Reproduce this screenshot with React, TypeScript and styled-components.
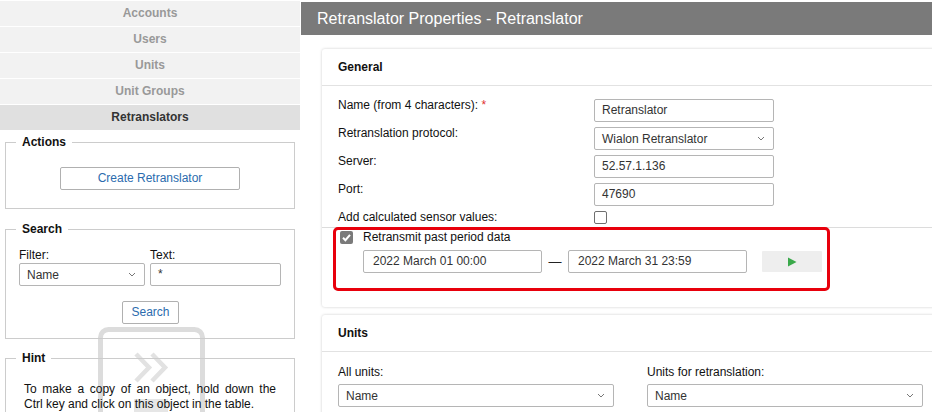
import React from "react";
import styled, { createGlobalStyle } from "styled-components";

const GlobalStyle = createGlobalStyle`
  html, body {
    margin: 0;
    padding: 0;
    background: #ffffff;
  }
  body {
    font-family: "Liberation Sans", Arial, sans-serif;
    font-size: 12px;
    color: #222;
  }
  * {
    box-sizing: border-box;
  }
`;

const navItems = ["Accounts", "Users", "Units", "Unit Groups", "Retranslators"];

const Chevron = () => (
  <svg width="8" height="5" viewBox="0 0 8 5">
    <path d="M1 1 L4 4 L7 1" fill="none" stroke="#777" strokeWidth="1" />
  </svg>
);

const CheckMark = () => (
  <svg width="13" height="13" viewBox="0 0 13 13">
    <path d="M3 6.8 L5.4 9.2 L10 3.8" fill="none" stroke="#fff" strokeWidth="2" />
  </svg>
);

const PlayIcon = () => (
  <svg width="10" height="10" viewBox="0 0 10 10">
    <path d="M1 0.5 L9.5 5 L1 9.5 Z" fill="#3aa94a" />
  </svg>
);

const WatermarkIcon = () => (
  <Watermark width="112" height="87" viewBox="0 0 112 87">
    <rect x="5.5" y="4.5" width="102" height="120" rx="8" fill="none" stroke="#dcdcdc" strokeWidth="5" />
    <path d="M41 29 L54 42.5 L41 56" fill="none" stroke="#e2e2e2" strokeWidth="4.5" />
    <path d="M57 29 L70 42.5 L57 56" fill="none" stroke="#e2e2e2" strokeWidth="4.5" />
    <rect x="39" y="74" width="34" height="20" fill="#e6e6e6" />
  </Watermark>
);

const App = () => {
  return (
    <>
      <GlobalStyle />
      <Page>
        <Sidebar>
          <WatermarkIcon />
          <Nav>
            {navItems.map((item) => (
              <NavItem key={item} $active={item === "Retranslators"}>
                {item}
              </NavItem>
            ))}
          </Nav>

          <Group $gap={4}>
            <Legend>Actions</Legend>
            <ActionsBody>
              <Button $wide>Create Retranslator</Button>
            </ActionsBody>
          </Group>

          <Group $gap={13}>
            <Legend>Search</Legend>
            <SearchBody>
              <SearchFields>
                <SearchColumn $width={126}>
                  <SmallLabel>Filter:</SmallLabel>
                  <SelectBox>
                    <span>Name</span>
                    <Chevron />
                  </SelectBox>
                </SearchColumn>
                <SearchColumn $width={131}>
                  <SmallLabel>Text:</SmallLabel>
                  <TextBox>*</TextBox>
                </SearchColumn>
              </SearchFields>
              <Button>Search</Button>
            </SearchBody>
          </Group>

          <Group $gap={12}>
            <Legend>Hint</Legend>
            <HintText>
              To make a copy of an object, hold down the Ctrl key and click on this object in the table.
            </HintText>
          </Group>
        </Sidebar>

        <Main>
          <Header>Retranslator Properties - Retranslator</Header>
          <Content>
            <Card>
              <CardHeader>General</CardHeader>
              <FieldGrid>
                <FieldLabel>
                  Name (from 4 characters): <Required>*</Required>
                </FieldLabel>
                <TextBox>Retranslator</TextBox>
                <FieldLabel>Retranslation protocol:</FieldLabel>
                <SelectBox>
                  <span>Wialon Retranslator</span>
                  <Chevron />
                </SelectBox>
                <FieldLabel>Server:</FieldLabel>
                <TextBox>52.57.1.136</TextBox>
                <FieldLabel>Port:</FieldLabel>
                <TextBox>47690</TextBox>
                <FieldLabel>Add calculated sensor values:</FieldLabel>
                <CheckBox />
              </FieldGrid>
              <RetransmitSection>
                <Highlight>
                  <CheckRow>
                    <CheckBox $checked>
                      <CheckMark />
                    </CheckBox>
                    <FieldLabel>Retransmit past period data</FieldLabel>
                  </CheckRow>
                  <DateRow>
                    <DateBox>2022 March 01 00:00</DateBox>
                    <Dash>—</Dash>
                    <DateBox>2022 March 31 23:59</DateBox>
                    <PlayButton>
                      <PlayIcon />
                    </PlayButton>
                  </DateRow>
                </Highlight>
              </RetransmitSection>
            </Card>

            <Card>
              <CardHeader>Units</CardHeader>
              <UnitsBody>
                <UnitsColumn>
                  <FieldLabel>All units:</FieldLabel>
                  <SelectBox>
                    <span>Name</span>
                    <Chevron />
                  </SelectBox>
                </UnitsColumn>
                <UnitsColumn>
                  <FieldLabel>Units for retranslation:</FieldLabel>
                  <SelectBox>
                    <span>Name</span>
                    <Chevron />
                  </SelectBox>
                </UnitsColumn>
              </UnitsBody>
            </Card>
          </Content>
        </Main>
      </Page>
    </>
  );
};

const Page = styled.div`
  display: flex;
  width: 932px;
  height: 412px;
  overflow: hidden;
  background: #fff;
`;

const Sidebar = styled.aside`
  position: relative;
  width: 300px;
  flex-shrink: 0;
  display: flex;
  flex-direction: column;
`;

const Nav = styled.nav`
  position: relative;
  display: flex;
  flex-direction: column;
  padding-top: 1px;
`;

const NavItem = styled.div<{ $active?: boolean }>`
  height: 25px;
  margin-bottom: 1px;
  line-height: 25px;
  text-align: center;
  font-weight: bold;
  font-size: 12px;
  background: ${(p) => (p.$active ? "#e0e0e0" : "#f2f2f2")};
  color: ${(p) => (p.$active ? "#333" : "#999")};
`;

const Group = styled.fieldset<{ $gap: number }>`
  position: relative;
  margin: ${(p) => p.$gap}px 5px 0;
  padding: 0;
  border: 1px solid #cccccc;
  min-width: 0;
`;

const Legend = styled.legend`
  margin-left: 10px;
  padding: 0 6px;
  font-weight: bold;
  font-size: 12px;
  line-height: 15px;
  color: #111;
`;

const ActionsBody = styled.div`
  display: flex;
  justify-content: center;
  padding: 17px 0 18px;
`;

const Button = styled.div<{ $wide?: boolean }>`
  height: 23px;
  line-height: 21px;
  padding: 0 8px;
  width: ${(p) => (p.$wide ? "180px" : "auto")};
  text-align: center;
  border: 1px solid #b0b0b0;
  border-radius: 2px;
  background: #fff;
  color: #2b6cae;
  font-size: 12px;
`;

const SearchBody = styled.div`
  display: flex;
  flex-direction: column;
  align-items: center;
  gap: 15px;
  padding: 11px 12px 14px 13px;
`;

const SearchFields = styled.div`
  display: flex;
  gap: 5px;
  width: 100%;
`;

const SearchColumn = styled.div<{ $width: number }>`
  display: flex;
  flex-direction: column;
  width: ${(p) => p.$width}px;
`;

const SmallLabel = styled.div`
  line-height: 15px;
  font-size: 12px;
  color: #111;
`;

const SelectBox = styled.div`
  display: flex;
  align-items: center;
  justify-content: space-between;
  height: 23px;
  padding: 0 8px 0 7px;
  border: 1px solid #b5b5b5;
  border-radius: 2px;
  background: #fff;
  font-size: 12px;
  color: #333;
`;

const TextBox = styled.div`
  height: 23px;
  line-height: 21px;
  padding: 0 7px;
  border: 1px solid #b5b5b5;
  border-radius: 2px;
  background: #fff;
  font-size: 12px;
  color: #333;
`;

const HintText = styled.p`
  margin: 0;
  padding: 16px 18px 20px;
  line-height: 15px;
  font-size: 12px;
  text-align: justify;
  color: #111;
`;

const Watermark = styled.svg`
  position: absolute;
  left: 95px;
  top: 325px;
  pointer-events: none;
`;

const Main = styled.main`
  flex: 1;
  min-width: 0;
  margin-left: 1px;
  display: flex;
  flex-direction: column;
  overflow: hidden;
`;

const Header = styled.div`
  margin-top: 2px;
  height: 34px;
  line-height: 33px;
  padding-left: 16px;
  background: #7a7a7a;
  color: #fff;
  font-size: 16px;
  white-space: nowrap;
`;

const Content = styled.div`
  display: flex;
  flex-direction: column;
  gap: 8px;
  padding: 14px 0 0 21px;
`;

const Card = styled.section`
  width: 640px;
  background: #fff;
  border-radius: 3px;
  box-shadow: 0 0 3px rgba(0, 0, 0, 0.2);
`;

const CardHeader = styled.div`
  height: 37px;
  line-height: 37px;
  padding-left: 16px;
  border-bottom: 1px solid #e2e2e2;
  font-weight: bold;
  font-size: 12px;
  color: #111;
`;

const FieldGrid = styled.div`
  display: grid;
  grid-template-columns: 256px 180px;
  grid-template-rows: repeat(4, 23px) 13px;
  row-gap: 5px;
  padding: 13px 16px 3px;
`;

const FieldLabel = styled.div`
  line-height: 13px;
  font-size: 12px;
  color: #111;
`;

const Required = styled.span`
  color: #e03030;
`;

const CheckBox = styled.div<{ $checked?: boolean }>`
  width: 13px;
  height: 13px;
  border-radius: 2px;
  border: ${(p) => (p.$checked ? "none" : "1px solid #6f6f6f")};
  background: ${(p) => (p.$checked ? "#7a7a7a" : "#fff")};
  flex-shrink: 0;
  display: flex;
`;

const RetransmitSection = styled.div`
  border-top: 1px solid #dcdcdc;
  padding: 0 0 16px 11px;
`;

const Highlight = styled.div`
  width: 497px;
  margin-top: -1px;
  padding: 1px 0 15px 4px;
  border: 3px solid #e8000c;
  border-radius: 5px;
`;

const CheckRow = styled.div`
  display: flex;
  align-items: center;
  gap: 10px;
  height: 13px;
`;

const DateRow = styled.div`
  display: flex;
  align-items: center;
  margin: 6px 0 0 23px;
`;

const DateBox = styled(TextBox)`
  width: 179px;
  padding: 0 9px;
`;

const Dash = styled.span`
  width: 26px;
  text-align: center;
  font-size: 13px;
  color: #222;
`;

const PlayButton = styled.div`
  width: 60px;
  height: 21px;
  margin-left: 15px;
  display: flex;
  align-items: center;
  justify-content: center;
  background: #eeeeee;
  border-radius: 1px;
`;

const UnitsBody = styled.div`
  display: grid;
  grid-template-columns: 276px 276px;
  column-gap: 33px;
  padding: 14px 16px 20px;
`;

const UnitsColumn = styled.div`
  display: flex;
  flex-direction: column;
  gap: 5px;
`;

export default App;
